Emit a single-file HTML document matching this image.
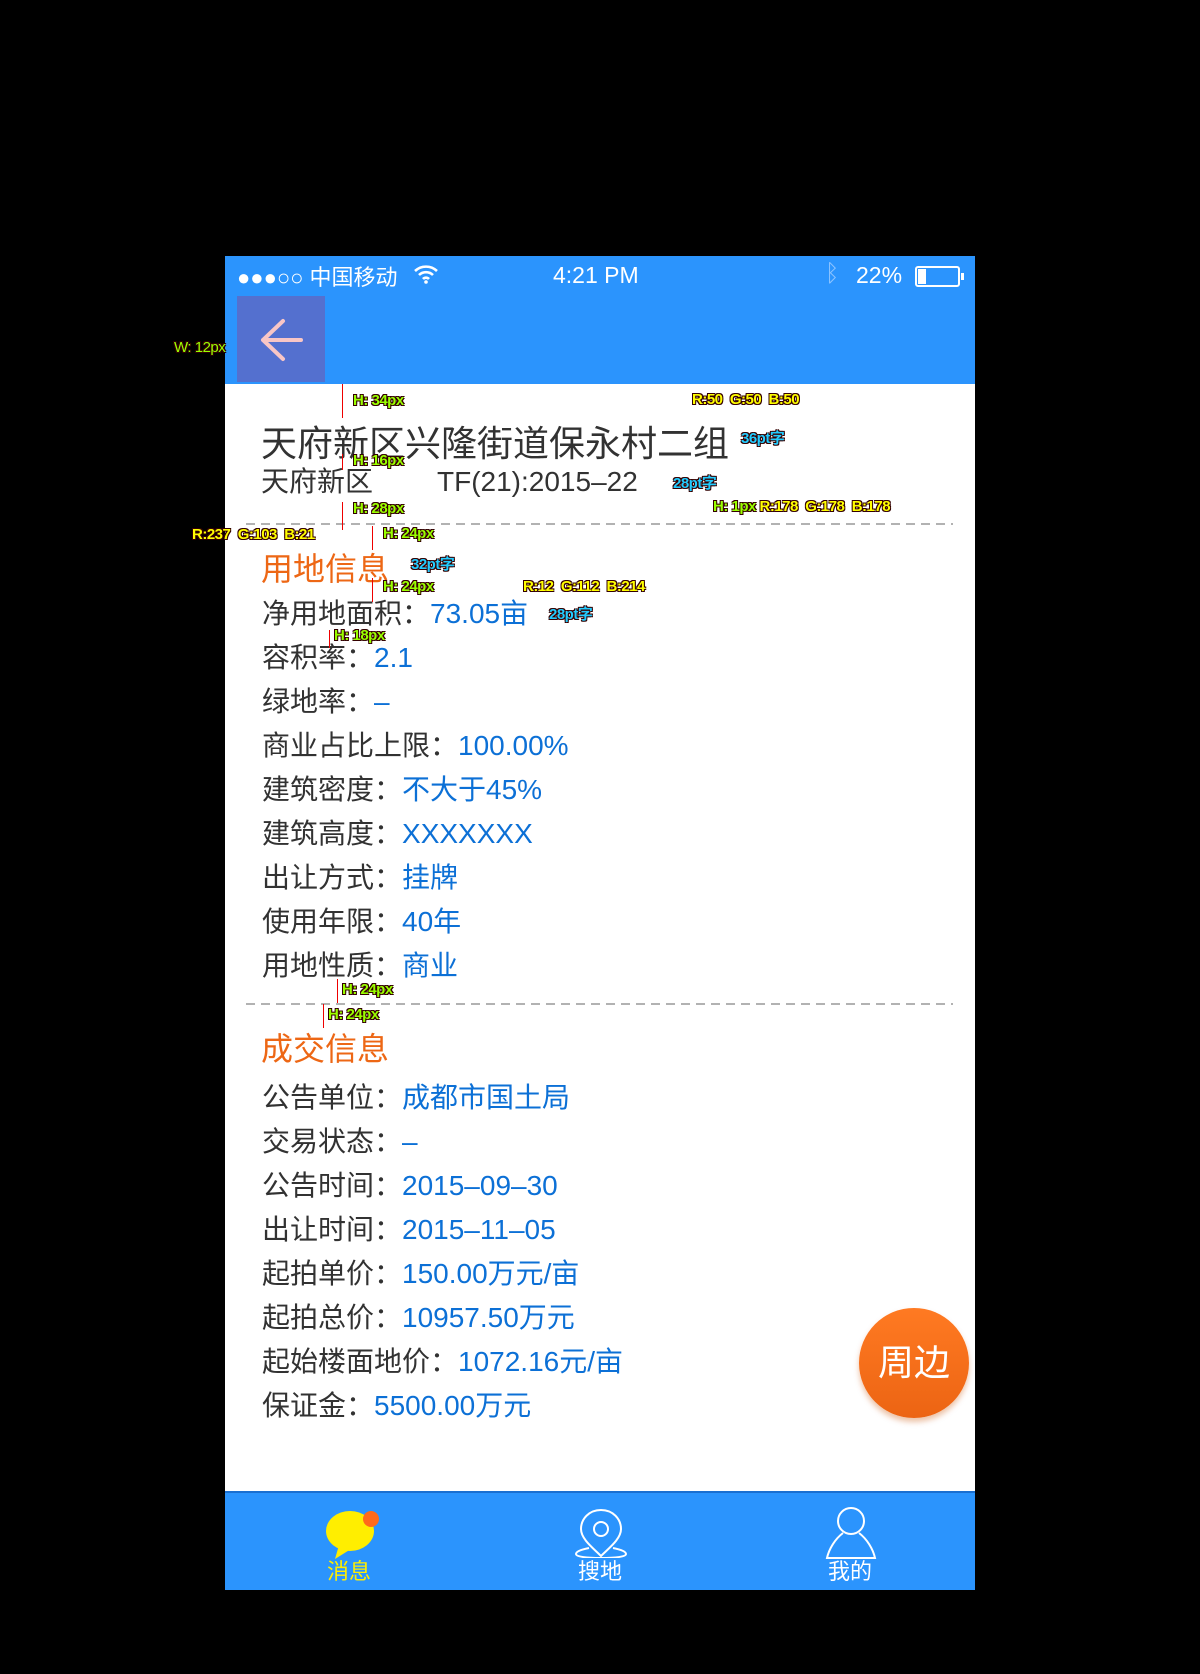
<!DOCTYPE html>
<html><head><meta charset="utf-8"><style>
*{margin:0;padding:0;box-sizing:border-box}
body{width:1200px;height:1674px;background:#000;position:relative;overflow:hidden;font-family:"Liberation Sans","Noto Sans CJK SC",sans-serif}
.a{position:absolute;white-space:nowrap}
#ph{position:absolute;left:225px;top:256px;width:750px;height:1334px;background:#fff;overflow:hidden}
.sb{position:absolute;left:0;top:0;width:750px;height:128px;background:#2b94fd}
.lab{color:#323232;font-size:28px;line-height:32px}
.val{color:#0c70d6}
.h{color:#ed6715;font-size:32px}
.dash{position:absolute;left:21px;width:707px;height:1.5px;background:repeating-linear-gradient(90deg,#b2b2b2 0 9px,transparent 9px 15px)}
.an{position:absolute;white-space:nowrap;font-size:15px;font-weight:bold;letter-spacing:-0.5px;color:#9f0;text-shadow:-1px -1px 0 #300,1px -1px 0 #300,-1px 1px 0 #300,1px 1px 0 #300}
.y{color:#ff0}.c{color:#2cf}
.rl{position:absolute;width:1px;background:#e00}
</style></head><body>
<div id="ph">
<div class="sb"></div>
<div class="a" style="left:12px;top:4px;color:#fff;font-size:22px">●●●○○ 中国移动</div>
<svg class="a" style="left:188px;top:8px" width="26" height="20" viewBox="0 0 26 20"><path d="M2 7a16 16 0 0 1 22 0M6 11a10 10 0 0 1 14 0M10 15a4 4 0 0 1 6 0" stroke="#fff" stroke-width="2.6" fill="none"/><circle cx="13" cy="18" r="1.8" fill="#fff"/></svg>
<div class="a" style="left:328px;top:6px;color:#fff;font-size:23px">4:21 PM</div>
<div class="a" style="left:600px;top:4px;color:#8ec4ff;font-size:24px">ᛒ</div>
<div class="a" style="left:631px;top:6px;color:#fff;font-size:23px">22%</div>
<div class="a" style="left:690px;top:10px;width:45px;height:21px;border:2px solid #fff;border-radius:3px"><div style="width:8px;height:15px;margin:1px;background:#fff"></div></div>
<div class="a" style="left:736px;top:17px;width:3px;height:7px;background:#fff"></div>
<div class="a" style="left:12px;top:40px;width:88px;height:86px;background:#5470cf"></div>
<svg class="a" style="left:32px;top:62px" width="50" height="44" viewBox="0 0 50 44"><path d="M26 3L6 22L26 41M6 22H44" stroke="#f8c6c6" stroke-width="4" fill="none" stroke-linecap="round" stroke-linejoin="round"/></svg>

<div class="a" style="left:36px;top:159px;color:#323232;font-size:36px">天府新区兴隆街道保永村二组</div>
<div class="a lab" style="left:36px;top:210px">天府新区</div>
<div class="a lab" style="left:212px;top:210px">TF(21):2015–22</div>
<div class="dash" style="top:267px"></div>
<div class="a h" style="left:36px;top:288px">用地信息</div>
<div class="a lab" style="left:37px;top:342px">净用地面积：<span class="val">73.05亩</span></div>
<div class="a lab" style="left:37px;top:386px">容积率：<span class="val">2.1</span></div>
<div class="a lab" style="left:37px;top:430px">绿地率：<span class="val">–</span></div>
<div class="a lab" style="left:37px;top:474px">商业占比上限：<span class="val">100.00%</span></div>
<div class="a lab" style="left:37px;top:518px">建筑密度：<span class="val">不大于45%</span></div>
<div class="a lab" style="left:37px;top:562px">建筑高度：<span class="val">XXXXXXX</span></div>
<div class="a lab" style="left:37px;top:606px">出让方式：<span class="val">挂牌</span></div>
<div class="a lab" style="left:37px;top:650px">使用年限：<span class="val">40年</span></div>
<div class="a lab" style="left:37px;top:694px">用地性质：<span class="val">商业</span></div>
<div class="dash" style="top:747px"></div>
<div class="a h" style="left:36px;top:768px">成交信息</div>
<div class="a lab" style="left:37px;top:826px">公告单位：<span class="val">成都市国土局</span></div>
<div class="a lab" style="left:37px;top:870px">交易状态：<span class="val">–</span></div>
<div class="a lab" style="left:37px;top:914px">公告时间：<span class="val">2015–09–30</span></div>
<div class="a lab" style="left:37px;top:958px">出让时间：<span class="val">2015–11–05</span></div>
<div class="a lab" style="left:37px;top:1002px">起拍单价：<span class="val">150.00万元/亩</span></div>
<div class="a lab" style="left:37px;top:1046px">起拍总价：<span class="val">10957.50万元</span></div>
<div class="a lab" style="left:37px;top:1090px">起始楼面地价：<span class="val">1072.16元/亩</span></div>
<div class="a lab" style="left:37px;top:1134px">保证金：<span class="val">5500.00万元</span></div>

<div class="a" style="left:634px;top:1052px;width:110px;height:110px;border-radius:50%;background:linear-gradient(#ff7a22,#ec6413);box-shadow:0 4px 6px rgba(200,80,0,.35);color:#fff;font-size:36px;line-height:110px;text-align:center">周边</div>

<div class="a" style="left:0;top:1235px;width:750px;height:99px;background:#2b94fd;border-top:2px solid #1a6fd0"></div>
<svg class="a" style="left:100px;top:1253px" width="56" height="52" viewBox="0 0 56 52"><ellipse cx="25" cy="22" rx="24" ry="20" fill="#ffee00"/><path d="M14 36L10 50L26 40Z" fill="#ffee00"/><circle cx="46" cy="10" r="8" fill="#ff6a1a"/></svg>
<div class="a" style="left:102px;top:1298px;color:#ffee00;font-size:22px">消息</div>
<svg class="a" style="left:350px;top:1252px" width="52" height="50" viewBox="0 0 52 50"><path d="M26 2C14 2 6 11 6 21C6 31 18 40 26 48C34 40 46 31 46 21C46 11 38 2 26 2Z" stroke="#fff" stroke-width="2" fill="none"/><circle cx="26" cy="21" r="7" stroke="#fff" stroke-width="2" fill="none"/><path d="M14 40C4 42 1 44 1 46C1 49 12 50 26 50C40 50 51 49 51 46C51 44 48 42 38 40" stroke="#fff" stroke-width="2" fill="none"/></svg>
<div class="a" style="left:353px;top:1298px;color:#fff;font-size:22px">搜地</div>
<svg class="a" style="left:600px;top:1251px" width="52" height="52" viewBox="0 0 52 52"><circle cx="26" cy="14" r="13" stroke="#fff" stroke-width="2" fill="none"/><path d="M18 26C10 32 4 42 2 51H50C48 42 42 32 34 26" stroke="#fff" stroke-width="2" fill="none"/></svg>
<div class="a" style="left:603px;top:1298px;color:#fff;font-size:22px">我的</div>

<div class="rl" style="left:117px;top:128px;height:34px"></div>
<div class="rl" style="left:117px;top:198px;height:16px"></div>
<div class="rl" style="left:117px;top:246px;height:28px"></div>
<div class="rl" style="left:147px;top:270px;height:24px"></div>
<div class="rl" style="left:147px;top:322px;height:24px"></div>
<div class="rl" style="left:104px;top:374px;height:18px"></div>
<div class="rl" style="left:112px;top:723px;height:24px"></div>
<div class="rl" style="left:98px;top:748px;height:24px"></div>
<div class="an" style="left:128px;top:136px">H: 34px</div>
<div class="an y" style="left:467px;top:135px">R:50 &nbsp;G:50 &nbsp;B:50</div>
<div class="an c" style="left:516px;top:171px">36pt字</div>
<div class="an" style="left:128px;top:196px">H: 16px</div>
<div class="an c" style="left:448px;top:216px">28pt字</div>
<div class="an" style="left:128px;top:244px">H: 28px</div>
<div class="an y" style="left:488px;top:242px"><span style="color:#9f0">H: 1px</span> R:178 &nbsp;G:178 &nbsp;B:178</div>
<div class="an" style="left:158px;top:269px">H: 24px</div>
<div class="an c" style="left:186px;top:297px">32pt字</div>
<div class="an" style="left:158px;top:322px">H: 24px</div>
<div class="an y" style="left:298px;top:322px">R:12 &nbsp;G:112 &nbsp;B:214</div>
<div class="an c" style="left:324px;top:347px">28pt字</div>
<div class="an" style="left:109px;top:371px">H: 18px</div>
<div class="an" style="left:117px;top:725px">H: 24px</div>
<div class="an" style="left:103px;top:750px">H: 24px</div>
</div>
<div class="an" style="left:174px;top:339px;font-weight:normal">W: 12px</div>
<div class="an y" style="left:192px;top:526px">R:237 &nbsp;G:103 &nbsp;B:21</div>
</body></html>
